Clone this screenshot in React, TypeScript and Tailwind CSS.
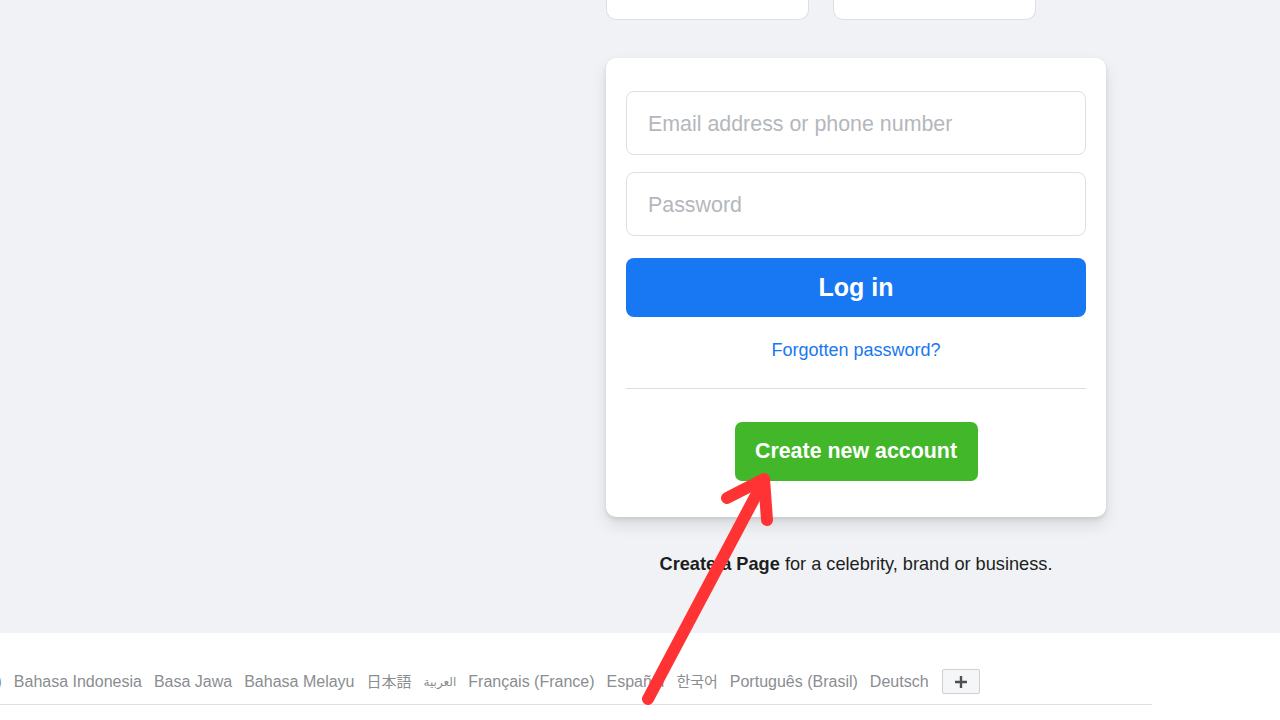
import React from "react";

const langs = [
  "English (UK)",
  "Bahasa Indonesia",
  "Basa Jawa",
  "Bahasa Melayu",
  "日本語",
  "العربية",
  "Français (France)",
  "Español",
  "한국어",
  "Português (Brasil)",
  "Deutsch",
];

function langClass(l: string) {
  if (l === "العربية") return "text-[12px]";
  if (l === "日本語" || l === "한국어") return "text-[15px]";
  return "";
}

export default function App() {
  return (
    <div
      className="relative w-[1280px] h-[720px] overflow-hidden bg-white"
      style={{ fontFamily: '"Liberation Sans", Arial, "Noto Sans CJK JP", "Noto Sans CJK KR", "DejaVu Sans", sans-serif' }}
    >
      <div className="h-[633px] bg-[#f0f2f5] grid grid-cols-[606px_500px]">
        <div />
        <div className="flex flex-col">
          <div className="flex gap-[24px]">
            <div className="w-[203px] h-[20px] bg-white border border-t-0 border-[#dddfe2] rounded-b-[10px]" />
            <div className="w-[203px] h-[20px] bg-white border border-t-0 border-[#dddfe2] rounded-b-[10px]" />
          </div>
          <div className="mt-[38px] w-[500px] bg-white rounded-[10px] shadow-[0_2px_4px_rgba(0,0,0,0.1),0_8px_16px_rgba(0,0,0,0.1)] px-[20px] pt-[33px] pb-[36px] flex flex-col">
            <input
              className="h-[64px] w-full border border-[#dddfe2] rounded-[8px] px-[21px] pt-[2px] text-[21.4px] text-[#1c1e21] placeholder:text-[#b4b7bc] outline-none"
              placeholder="Email address or phone number"
            />
            <input
              className="mt-[17px] h-[64px] w-full border border-[#dddfe2] rounded-[8px] px-[21px] pt-[2px] text-[21.4px] text-[#1c1e21] placeholder:text-[#b4b7bc] outline-none"
              placeholder="Password"
              type="password"
            />
            <button className="mt-[22px] h-[59px] w-full bg-[#1877f2] rounded-[8px] text-white font-bold text-[25px]">
              Log in
            </button>
            <div className="mt-[22px] text-center text-[18px] leading-[22px] text-[#1877f2]">Forgotten password?</div>
            <div className="mt-[27px] h-px bg-[#dadde1]" />
            <div className="mt-[33px] flex justify-center">
              <button className="w-[243px] h-[59px] bg-[#42b72a] rounded-[7px] text-white font-bold text-[21.4px]">
                Create new account
              </button>
            </div>
          </div>
          <div className="mt-[36px] text-center text-[18.2px] leading-[22px] text-[#1c1e21]">
            <span className="font-bold">Create a Page</span> for a celebrity, brand or business.
          </div>
        </div>
      </div>
      <div className="h-[87px] bg-white">
        <div className="w-[1152px] h-[72px] border-b border-[#dddfe2] flex items-end pb-[10px]">
          <div className="ml-[-88px] flex items-center gap-[12px] text-[16px] leading-[20px] text-[#8a8d91] whitespace-nowrap">
            {langs.map((l) => (
              <span key={l} className={langClass(l)}>
                {l}
              </span>
            ))}
            <div className="ml-[1px] w-[38px] h-[25px] bg-[#f5f6f7] border border-[#ccd0d5] rounded-[2px] flex items-center justify-center">
              <svg width="16" height="16" viewBox="0 0 16 16">
                <path d="M8 2v12M2 8h12" stroke="#4b4f56" strokeWidth="2.4" />
              </svg>
            </div>
          </div>
        </div>
      </div>
      <svg className="absolute left-0 top-0 pointer-events-none" width="1280" height="720">
        <g stroke="#ff3333" strokeWidth="12" strokeLinecap="round" fill="none">
          <line x1="648" y1="699" x2="763" y2="482" />
          <polyline points="727,498 764,479 767,520" strokeLinejoin="round" />
        </g>
      </svg>
    </div>
  );
}
